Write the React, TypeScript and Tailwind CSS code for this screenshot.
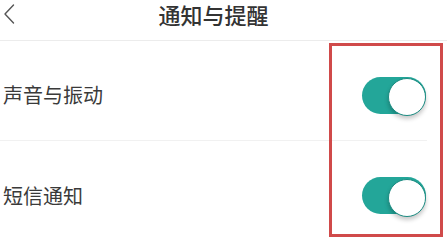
const SETTINGS = [
  { id: "sound", label: "声音与振动", on: true },
  { id: "sms", label: "短信通知", on: true },
];

const Toggle = ({ on }: { on: boolean }) => (
  <div
    className={
      "flex h-[37px] w-[64px] items-center justify-end rounded-full " +
      (on ? "bg-[#23a699]" : "bg-[#dcdcdc]")
    }
  >
    <div className="h-[38px] w-[38px] shrink-0 translate-y-[2px] rounded-full border-[1.5px] border-[#1c8c82] bg-white shadow-[0_3px_4px_rgba(0,0,0,0.22)]" />
  </div>
);

const App = () => {
  return (
    <div
      className="relative h-[242px] w-[447px] overflow-hidden bg-white text-[#333]"
      style={{ fontFamily: '"Noto Sans CJK SC", "Noto Sans", sans-serif' }}
    >
      <div className="flex h-[41px] items-start border-b border-[#ececec]">
        <div className="w-[40px] pl-[3px] pt-[4px]">
          <svg width="12" height="20" viewBox="0 0 12 20" fill="none">
            <polyline
              points="10.5,1 2,10 10.5,19"
              stroke="#555"
              strokeWidth="1.4"
              strokeLinecap="round"
              strokeLinejoin="round"
            />
          </svg>
        </div>
        <h1 className="flex-1 text-center text-[22px] leading-[28px] font-medium text-[#333]">
          通知与提醒
        </h1>
        <div className="w-[60px]" />
      </div>

      {SETTINGS.map((item, index) => (
        <div
          key={item.id}
          className={
            "mr-[20px] flex h-[100px] items-center justify-between pt-[9px] pl-[3px] pr-[1px] " +
            (index < SETTINGS.length - 1 ? "border-b border-[#f1f1f1]" : "")
          }
        >
          <span className="text-[20px] leading-[24px] text-[#3a3a3a]">{item.label}</span>
          <Toggle on={item.on} />
        </div>
      ))}

      {/* annotation box */}
      <div className="pointer-events-none absolute left-[329px] top-[43px] h-[194px] w-[114px] border-[3px] border-[#d04a4a]" />
    </div>
  );
};

export default App;
